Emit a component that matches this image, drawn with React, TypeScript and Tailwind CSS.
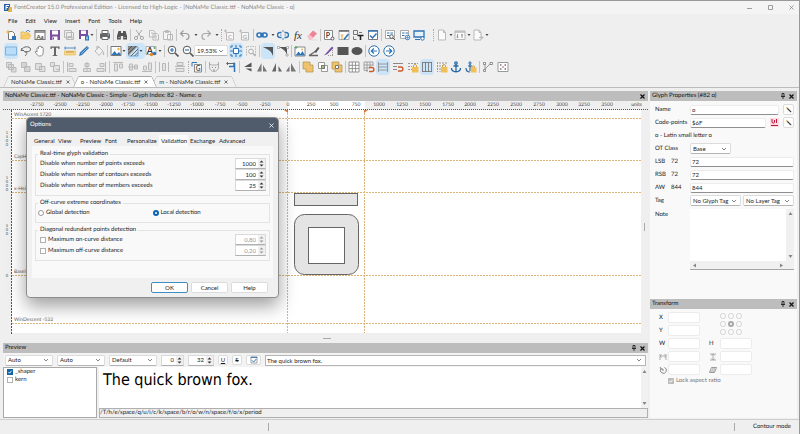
import type { ReactNode } from 'react';

const BLUE = '#2f74b5';
const DARK = '#555555';
const PALE = '#b9b9b9';
const GOLD = '#e9b44c';
const PURPLE = '#7a4fa3';

const icons: Record<string, ReactNode> = {
  newFont: (
    <>
      <path d="M3.5 2.5h4l2 2v6h-6z" fill="#fff" stroke="#777" />
      <path d="M1 3h4M3 1v4" stroke={GOLD} />
      <rect x="7" y="7" width="4" height="4" fill={BLUE} />
    </>
  ),
  open: (
    <>
      <path d="M1 10V3h3l1 1h4v2" fill="#f6d98d" stroke={GOLD} />
      <path d="M1 10l2-4h8l-2 4z" fill="#f7cf6b" stroke={GOLD} strokeWidth=".6" />
      <path d="M6 3c1-2 3-2 4 0" stroke={BLUE} />
    </>
  ),
  installed: (
    <>
      <rect x="1" y="1.5" width="10" height="9" fill="#fff" stroke="#777" />
      <path d="M1 3h10" stroke="#777" strokeWidth="1.5" />
      <text x="6" y="9.5" fontSize="6" fontWeight="700" textAnchor="middle" fill="#444">Aa</text>
    </>
  ),
  save: (
    <>
      <path d="M1 1h10v10H1z" fill={PURPLE} />
      <path d="M3 1.500h6v4H3zM3.500 7.500h5V11h-5z" fill="#fff" />
      <path d="M4.500 8.500v2" stroke={PURPLE} />
    </>
  ),
  saveAll: <path d="M1.500 1.500h7v7h-7zM3.500 3.500h7v7h-7zM5 10V7.500h4V10" fill="#eee" stroke={PALE} />,
  saveAs: (
    <>
      <path d="M1 1h9v9H1z" fill={PURPLE} />
      <path d="M3 1.500h5v3.500H3zM3 7h4v3H3z" fill="#fff" />
      <rect x="7" y="6.500" width="4" height="5" fill={BLUE} />
      <path d="M9 7.500v3" stroke="#fff" />
    </>
  ),
  print: (
    <>
      <path d="M3 1.500h6v3H3z" fill="#fff" stroke="#666" />
      <path d="M1 4.500h10v5H1z" fill="#666" />
      <path d="M3 7.500h6v3H3z" fill="#fff" stroke="#666" />
      <path d="M8.500 6h1.500" stroke="#9cc7ee" />
    </>
  ),
  find: (
    <>
      <path d="M2.500 2h2.500v2h2V2h2.500l1.500 5v3.500H7.200V7H4.800v3.500H1V7z" fill={DARK} />
      <path d="M2 8.500h2M8 8.500h2" stroke="#999" />
    </>
  ),
  cut: (
    <g stroke="#a8a8a8">
      <path d="M3 1l5 7M9 1L4 8" />
      <circle cx="3" cy="9" r="1.600" />
      <circle cx="9" cy="9" r="1.600" />
    </g>
  ),
  copy: <path d="M1.500 1.500h4l1.500 1.500v5H1.500zM5 4.500h4l1.500 1.500v5H5zM3 4h2M6.500 7h2.500M6.500 9h2.500" fill="#f4f4f4" stroke={PALE} />,
  paste: <path d="M1.500 2.500h7v8h-7zM3.500 1.500h3v2h-3zM5.500 5.500h5v5.500h-5z" fill="#f4f4f4" stroke={PALE} />,
  undo: <path d="M4.500 1.500L1.500 4.500l3 3M2 4.500h5c4 0 4 6 0 6" stroke="#9b9b9b" strokeWidth="1.200" />,
  redo: <path d="M7.500 1.500l3 3-3 3M10 4.500H5c-4 0-4 6 0 6" stroke="#a9a9a9" strokeWidth="1.200" />,
  docC: (
    <>
      <path d="M2.500 3.500h7v7.500h-7z" fill="#f6f6f6" stroke={PALE} />
      <path d="M0 2h3M1.500 .5v3" stroke={PALE} />
      <text x="6" y="9.500" fontSize="6" textAnchor="middle" fill="#999">C</text>
    </>
  ),
  docG: (
    <>
      <path d="M2.500 3.500h7v7.500h-7z" fill="#f6f6f6" stroke={PALE} />
      <path d="M0 2h3M1.500 .5v3" stroke={PALE} />
      <text x="6" y="9.500" fontSize="6" textAnchor="middle" fill="#999">G</text>
    </>
  ),
  link: (
    <g stroke={BLUE} strokeWidth="1.600">
      <rect x="1" y="4" width="5" height="4" rx="2" />
      <rect x="6" y="4" width="5" height="4" rx="2" />
      <path d="M4 6h4" />
    </g>
  ),
  unlink: (
    <>
      <path d="M4.500 3.500H3a2.500 2.500 0 000 5h1.500M7.500 3.500H9a2.500 2.500 0 010 5H7.500" stroke={BLUE} strokeWidth="1.400" />
      <path d="M6 1v2M6 9v2M3 6h1.500M7.500 6H9" stroke={BLUE} strokeWidth=".8" />
    </>
  ),
  fx: (
    <text x="6" y="9.500" fontSize="11" fontStyle="italic" fontFamily="Liberation Serif, serif" textAnchor="middle" fill="#333">fx</text>
  ),
  eraser: (
    <>
      <path d="M1.500 7.500l5.500-6 4 3-5.500 6H3.500z" fill="#ef8396" />
      <path d="M1.500 7.500l1.800-2 4 3-1.800 2h-2z" fill="#f9c3cc" />
      <path d="M5 11h6" stroke="#ddd" />
    </>
  ),
  pSettings: (
    <>
      <path d="M1.500 1.500h8v9h-8z" fill="#fff" stroke="#888" />
      <text x="5" y="8.500" fontSize="7" fontWeight="700" textAnchor="middle" fill="#444">P</text>
      <circle cx="9.500" cy="9.500" r="1.500" fill="#fff" stroke="#555" />
    </>
  ),
  tableEdit: (
    <>
      <path d="M1 1.500h10v9H1z" fill="#fff" stroke="#aaa" />
      <path d="M1 2h10" stroke="#666" strokeWidth="1.500" />
      <path d="M2.500 6h3M4 6v4" stroke={GOLD} strokeWidth="1.200" />
      <path d="M6 10.500L10.500 5" stroke={BLUE} strokeWidth="1.600" />
    </>
  ),
  transformTool: (
    <>
      <path d="M1.500 1.500h4v4h-4zM1.500 7.500v3h3M7 3.500h3" stroke="#777" />
      <path d="M5.500 6.500h6M8.500 6.500V11" stroke="#222" strokeWidth="1.600" />
    </>
  ),
  validate: (
    <>
      <path d="M1.500 1.500h9v9h-9z" fill="#fff" stroke="#777" />
      <path d="M1 2h10" stroke={BLUE} strokeWidth="1.500" />
      <path d="M3 6.500L5.500 9l4-4.500" stroke={BLUE} strokeWidth="1.500" />
    </>
  ),
  textFind: (
    <>
      <path d="M1.500 1.500h9v8h-9z" fill="#fff" stroke="#aaa" />
      <path d="M3 4h2.500M6.500 4H9M3 6.500h2.500" stroke={BLUE} />
      <circle cx="7.500" cy="7.500" r="1.800" fill="#fff" stroke="#555" />
      <path d="M9 9l2 2" stroke="#555" />
    </>
  ),
  textWeb: (
    <>
      <path d="M1.500 1.500h8v8h-8z" fill="#fff" stroke="#aaa" />
      <path d="M3 4h2.500M6.500 4H9M3 6.500h2.500" stroke={BLUE} />
      <circle cx="8.500" cy="8.500" r="2.300" fill="#d7e7f7" stroke={BLUE} strokeWidth=".8" />
      <path d="M6.500 8.500h4M8.500 6.500v4" stroke={BLUE} strokeWidth=".5" />
    </>
  ),
  monitor: (
    <>
      <path d="M1 2h10v6H1z" fill="#e4f0fb" stroke={BLUE} strokeWidth="1.300" />
      <path d="M2 10.500h5" stroke={BLUE} />
      <circle cx="9.500" cy="9.500" r="1.700" fill="#fff" stroke={BLUE} />
    </>
  ),
  doc: <path d="M2.500 1h5l2 2.500V11h-7zM7.500 1v2.500h2" fill="#fbfbfb" stroke={PALE} />,
  cards: (
    <>
      <path d="M1 2h10v8.500H1z" fill="#fbfbfb" stroke={PALE} />
      <path d="M1 3h10" stroke={PALE} strokeWidth="1.500" />
      <path d="M3.500 5v4M2.500 8h2M8 5v4M7 6h2" stroke="#999" />
    </>
  ),
  docRun: <path d="M2 1h5l2 2.500V11H2zM7 1v2.500h2M7 8.500h4M9.500 7l1.500 1.500L9.500 10" fill="#fbfbfb" stroke={PALE} />,

  select: <path d="M.5 2h11v8H.5z" fill="#b9ddf8" stroke="#7fb2dc" />,
  lasso: (
    <>
      <path d="M2 4.500C3 1 10 1 10.500 4S6 7 4 6.500M2 3l-1 2.500 3 0" stroke="#666" />
      <path d="M5 7c3 0 2 2 0 4" stroke="#666" />
    </>
  ),
  pan: <path d="M3 6V3.500c0-1 1.500-1 1.500 0V2c0-1 1.500-1 1.500 0 0-1 1.500-1 1.500 0v1c0-1 1.700-1 1.700 0V7c0 3-1 4-3.500 4-2 0-2.500-1-4.500-4 0-1 1-1 2 0z" fill="#fff" stroke="#777" strokeWidth=".8" />,
  text: <path d="M1.500 4V1.500h9V4h-1l-.5-1.200H7V10l1.500.5v.5h-5v-.5L5 10V2.800H3L2.500 4z" fill="#666" />,
  measure: (
    <>
      <path d="M1 1.500v3M11 1.500v3M1 3h10" stroke={BLUE} strokeWidth=".8" />
      <path d="M.5 6h11v4H.5z" fill="#f8d789" stroke={GOLD} strokeWidth=".6" />
      <path d="M3 6v2M5 6v2M7 6v2M9 6v2" stroke="#997428" strokeWidth=".6" />
    </>
  ),
  pencil: (
    <>
      <path d="M1 11l1-3.500L9 1l2 2-7 7z" fill={BLUE} />
      <path d="M3 9l6.500-6.500" stroke="#a7cdf0" strokeWidth=".8" />
    </>
  ),
  bucket: (
    <>
      <path d="M2 6l4-4 4 4-4 4.500z" fill="#f2f2f2" stroke={PALE} />
      <path d="M4 4.500V1.500h2M10.500 7v3" stroke={PALE} strokeWidth="1.200" />
    </>
  ),
  image: (
    <>
      <path d="M1 1.500h10v9H1z" fill="#fff" stroke="#777" />
      <path d="M1.500 10l3-4 2.500 3 2-2 2 3z" fill={BLUE} />
      <circle cx="8.500" cy="4" r="1.200" fill={GOLD} />
    </>
  ),
  hatch: (
    <>
      <path d="M1 1h10L1 11z" fill="#888" />
      <path d="M4 11L11 4M7.500 11L11 7.500M1 5l4-4M1 9l8-8" stroke="#555" strokeWidth=".9" />
      <path d="M2 11h9V2" stroke={BLUE} strokeWidth=".6" />
    </>
  ),
  colorA: (
    <>
      <path d="M1 1.500h10v8H1z" fill="#fff" stroke="#aaa" />
      <text x="5" y="9" fontSize="9" fontWeight="700" textAnchor="middle" fill="#333">A</text>
      <circle cx="6.500" cy="9.500" r="1.800" fill="#e58a2b" />
      <circle cx="9.500" cy="8.500" r="1.700" fill={BLUE} />
      <circle cx="9.500" cy="3" r="1" fill="#59a869" />
    </>
  ),
  zoomIn: (
    <>
      <circle cx="5" cy="5" r="3.800" fill="#fff" stroke="#555" />
      <path d="M8 8l3.500 3.500" stroke="#555" strokeWidth="1.600" />
      <path d="M3 5h4M5 3v4" stroke={BLUE} strokeWidth="1.200" />
    </>
  ),
  zoomOut: (
    <>
      <circle cx="5" cy="5" r="3.800" fill="#fff" stroke="#555" />
      <path d="M8 8l3.500 3.500" stroke="#555" strokeWidth="1.600" />
      <path d="M3 5h4" stroke={BLUE} strokeWidth="1.200" />
    </>
  ),
  fit: (
    <>
      <path d="M3.500 3.500h5v5h-5z" fill="#fff" stroke={BLUE} />
      <path d="M1 3V1h2M9 1h2v2M11 9v2H9M3 11H1V9M6 0v3M6 9v3M0 6h3M9 6h3" stroke={BLUE} />
    </>
  ),
  zoomPage: (
    <>
      <path d="M1.500 10.500v-9h9v9" stroke={PALE} strokeDasharray="1.500 1" />
      <circle cx="6" cy="6.500" r="2.300" fill="#f6f6f6" stroke="#aaa" />
      <path d="M8 8.500l2.500 2.500" stroke="#aaa" strokeWidth="1.300" />
    </>
  ),
  fillShape: <path d="M1 2h10v9C9 5 5 4 1 2z" fill={DARK} />,
  nodeShape: (
    <>
      <path d="M2 2h8v8C9 6 6 4 2 2z" fill={DARK} />
      <path d="M.5 1.500h2v2h-2zM9.500 1.500h2v2h-2zM9 9h2v2H9z" fill="#fff" stroke="#888" strokeWidth=".6" />
    </>
  ),
  picture: (
    <>
      <path d="M1 2h10v9H1z" fill="#fff" stroke="#888" />
      <path d="M1.500 10.500l3-4 2 2.500 2-3 2.500 4.500z" fill={BLUE} />
      <path d="M.5 2.500h3M2 1v3" stroke="#59a869" />
      <circle cx="8" cy="4.500" r="1" fill={GOLD} />
    </>
  ),
  bend: (
    <>
      <path d="M1 10.500h9M1 10.500L8 6" stroke="#666" strokeWidth="1.300" />
      <path d="M6.500 6.500L10 2l1.500 1-3.500 5z" fill={DARK} />
    </>
  ),
  knife: (
    <>
      <path d="M1 10.500L9 1.500l1.500 1.500-6 6z" fill={PURPLE} />
      <path d="M5 10.500h6M9.500 5v5" stroke="#999" strokeDasharray="1 1" />
    </>
  ),
  rectShape: <path d="M.5 2h11v8H.5z" fill={DARK} />,
  ellipse: <ellipse cx="6" cy="6" rx="5.500" ry="4" fill={DARK} />,
  prev: (
    <>
      <circle cx="6" cy="6" r="5.200" fill="#fff" stroke={BLUE} />
      <path d="M9 6H3.500M5.800 3.500L3.300 6l2.500 2.500" stroke={BLUE} strokeWidth="1.200" />
    </>
  ),
  next: (
    <>
      <circle cx="6" cy="6" r="5.200" fill="#fff" stroke={BLUE} />
      <path d="M3 6h5.500M6.200 3.500L8.700 6 6.200 8.500" stroke={BLUE} strokeWidth="1.200" />
    </>
  ),

  toFront: <path d="M1.500 1.500h5v5h-5zM6.500 6.500h4.500V11H6.500zM3.500 3.500h5v5h-5z" fill="#dcdcdc" stroke={PALE} />,
  forward: <path d="M1.500 1.500h5v5h-5zM4.500 5.500h5.500v5H4.500z" fill="#d5d5d5" stroke={PALE} />,
  backward: <path d="M5.500 5.500h5.500v5H5.500zM1.500 2.500h6v6h-6z" fill="#dedede" stroke={PALE} />,
  toBack: <path d="M4.500 4.500h6v6h-6zM1.500 1.500h4v4h-4zM7.500 8.500h3" fill="#e2e2e2" stroke={PALE} />,
  alignL: <path d="M1.500 1v10M3 2.500h4v3H3zM3 7.500h7v3H3z" fill="#e2e2e2" stroke={PALE} />,
  alignC: <path d="M6 1v10M4 2.500h4v3H4zM2.500 7.500h7v3h-7z" fill="#e2e2e2" stroke={PALE} />,
  alignR: <path d="M10.500 1v10M5 2.500h4v3H5zM2 7.500h7v3H2z" fill="#e2e2e2" stroke={PALE} />,
  alignT: <path d="M1 1.500h10M2.500 3h3v7h-3zM7.500 3h3v4h-3z" fill="#e2e2e2" stroke={PALE} />,
  alignM: <path d="M1 6h10M2.500 3h3v6h-3zM7.500 4h3v4h-3z" fill="#e2e2e2" stroke={PALE} />,
  alignB: <path d="M1 10.500h10M2.500 5h3v4h-3zM7.500 2h3v7h-3z" fill="#e2e2e2" stroke={PALE} />,
  spreadH: <path d="M1.500 1v10M10.500 1v10M4.500 2.500h3v7h-3z" fill="#e2e2e2" stroke={PALE} />,
  spreadV: <path d="M1 5.500h10M3 1.500h6v3H3zM2 7.500h8v3H2z" fill="#e2e2e2" stroke={PALE} />,
  boxG: (
    <>
      <path d="M3.500 3.500h7v7.500h-7z" fill="#fff" stroke="#888" />
      <path d="M1 1.500h5M1 1.500v4" stroke={BLUE} />
      <text x="7" y="9.800" fontSize="6.500" fontWeight="700" textAnchor="middle" fill="#555">G</text>
    </>
  ),
  mask: (
    <>
      <path d="M1.500 3L3.500 4h5l2-1v3c0 6-9 6-9 0zM1.500 3V1M10.500 3V1" fill="#eee" stroke="#aaa" />
      <path d="M4 6.500h1M7 6.500h1M5 9h2" stroke="#888" />
    </>
  ),
  metrics: (
    <>
      <path d="M2 2.500h8M3 1L1.500 2.500 3 4" stroke="#666" />
      <path d="M4 5.500h5V1.500M9.500 2v9" stroke={BLUE} strokeWidth="1.500" />
    </>
  ),
  rotL: <path d="M9.500 1.500v4.500H2zM3.500 7.500h6v3z" fill={DARK} />,
  rotR: <path d="M5.500 2v8.500H1zM7 4l4 6.500H7z" fill="#777" />,
  flipH: <path d="M5 2v8.500H1zM7.500 5v5.500H11zM7 3h2" fill="#666" />,
  flipV: <path d="M4.500 5v5.500H1zM6 2l5 8.500H6z" fill="#777" />,
  union: <path d="M1 1h7v3h3v7H4V8H1z" fill="#efc36d" stroke="#b08d49" strokeWidth=".7" />,
  intersect: (
    <>
      <path d="M1.500 1.500h6v6h-6zM4.500 4.500h6v6h-6z" fill="#fff" stroke="#999" />
      <path d="M4.500 4.500h3v3h-3z" fill="#9cc37a" stroke="#777" />
    </>
  ),
  exclude: (
    <>
      <path d="M1 1h7v3h3v7H4V8H1z" fill="#efc36d" stroke="#b08d49" strokeWidth=".7" />
      <path d="M4.500 4.500h3v3h-3z" fill="#fff" stroke="#777" />
    </>
  ),
  grid: <path d="M1 1h10v10H1zM4.300 1v10M7.600 1v10M1 4.300h10M1 7.600h10" fill="#fff" stroke="#8a8a8a" strokeWidth=".9" />,
  gridSnap: (
    <>
      <path d="M1 9V1h9v4M4 1v10M7 1v5M1 4h9M1 7h6M1 9.500h4" stroke="#999" strokeWidth=".9" />
      <path d="M6 6.500h3c2.500 0 2.500 4 0 4H6" stroke="#cc5b2a" strokeWidth="1.400" />
    </>
  ),
  guides: <path d="M1 3h10M1 6h10M1 9h10M1.500 1v10M10.500 1v10" stroke="#888" strokeWidth=".8" />,
  guideSnap: (
    <>
      <path d="M1 2.500h10M1 5.500h4M1 8.500h4" stroke="#888" />
      <path d="M6 6h3c2.500 0 2.500 4 0 4H6" stroke="#cc5b2a" strokeWidth="1.400" />
    </>
  ),
  guideLock: (
    <>
      <path d="M1 2.500h10M1 5.500h4M1 8.500h4" stroke="#999" strokeDasharray="2 1" />
      <path d="M6.500 6V5c0-2 3-2 3 0v1" stroke="#c79a3a" />
      <path d="M5 6h6.500v5.500H5z" fill="#f0bf57" />
    </>
  ),
  columns: <path d="M1 1.500h10M1 10.500h10M1.500 1v10M4.500 1v10M7.500 1v10M10.500 1v10" stroke="#777" strokeWidth=".9" />,
  columnLock: (
    <>
      <path d="M1.500 1v10M4 1v10M7 1v4M10 1v3" stroke="#999" strokeDasharray="2 1" />
      <path d="M6.500 6V5c0-2 3-2 3 0v1" stroke="#c79a3a" />
      <path d="M5 6h6.500v5.500H5z" fill="#f0bf57" />
    </>
  ),
  anchor: (
    <g stroke="#2467a8" strokeWidth="1.300">
      <circle cx="6" cy="2" r="1.200" />
      <path d="M6 3v8M3.500 5h5M1.500 7c0 5 9 5 9 0" />
    </g>
  ),
  anchorLock: (
    <>
      <path d="M5 3v7M3 5h4M1 7c0 3 2 4 4 4" stroke="#2467a8" strokeWidth="1.200" />
      <circle cx="5" cy="2" r="1.100" stroke="#2467a8" />
      <path d="M7 7V6c0-1.500 2.500-1.500 2.500 0v1" stroke="#c79a3a" />
      <path d="M5.800 6.500h5.700v5H5.800z" fill="#f0bf57" />
    </>
  ),
  nodes: (
    <>
      <path d="M3 3v6M3 8l5-5" stroke="#999" />
      <path d="M1.500 1.500h2v2h-2zM8 1.500h2.500v2H8zM1.500 8.500h2v2h-2z" fill="#fff" stroke="#777" strokeWidth=".8" />
    </>
  ),
  dice: (
    <>
      <path d="M1 1.500h10v9H1z" fill="#fff" stroke="#999" />
      <path d="M3 4h1.500M7.500 4H9M3 8h1.500M7.500 8H9" stroke="#777" strokeWidth="1.500" />
      <path d="M5 6h2" stroke="#cc5b5b" />
    </>
  ),
};

function Icon({ name }: { name: string }) {
  return (
    <svg viewBox="0 0 12 12" className="size-3 shrink-0" fill="none" aria-hidden="true">
      {icons[name]}
    </svg>
  );
}

function Tool({ name, active }: { name: string; active?: boolean }) {
  return (
    <button
      type="button"
      aria-label={name}
      className={active ? 'rounded-xs bg-[#cbe4f8] py-px outline outline-[#cbe4f8]' : 'py-px'}
    >
      <Icon name={name} />
    </button>
  );
}

function Caret() {
  return (
    <svg viewBox="0 0 4 4" className="size-1 shrink-0" aria-hidden="true">
      <path d="M.5 1h3L2 3z" fill="#444" />
    </svg>
  );
}

function Sep({ dotted }: { dotted?: boolean }) {
  return (
    <span className="flex w-[5px] shrink-0 justify-center">
      <span className={dotted ? 'h-3 border-l border-dotted border-[#aaa]' : 'h-3 border-l border-[#c4c4c4]'} />
    </span>
  );
}

// A name starting with "*" is switched on, "v" is a drop-down caret.
function Group({ width, items }: { width: string; items: string }) {
  return (
    <div className={`flex shrink-0 items-center justify-between ${width}`}>
      {items.split(' ').map((item, i) =>
        item === 'v' ? (
          <Caret key={i} />
        ) : (
          <Tool key={i} name={item.replace('*', '')} active={item.startsWith('*')} />
        ),
      )}
    </div>
  );
}

function Chevron() {
  return (
    <svg viewBox="0 0 6 6" className="pointer-events-none absolute top-1/2 right-1 size-1.5 -translate-y-1/2" fill="none">
      <path d="M1 2l2 2 2-2" stroke="#666" strokeWidth=".8" />
    </svg>
  );
}

function Combo({ label, value, className }: { label: string; value: string; className: string }) {
  return (
    <div className={`relative ${className}`}>
      <select
        aria-label={label}
        className="block h-[11px] w-full appearance-none rounded-xs border border-[#dcdcdc] border-b-[#b5b5b5] bg-white pl-0.5 leading-[8px]"
      >
        <option>{value}</option>
      </select>
      <Chevron />
    </div>
  );
}

function Spin({ id, label, value, className, disabled }: { id?: string; label?: string; value: string; className: string; disabled?: boolean }) {
  return (
    <div className={`flex h-[11px] items-center border border-[#dadada] border-b-[#b0b0b0] bg-white ${className}`}>
      <input
        id={id}
        aria-label={label}
        defaultValue={value}
        disabled={disabled}
        className="w-0 min-w-0 flex-1 pr-0.5 text-right disabled:text-[#999]"
      />
      <svg viewBox="0 0 7 9" className="h-[9px] w-[7px] bg-[#f0f0f0]" aria-hidden="true">
        <path d="M1.500 3.500l2-2 2 2zM1.500 5.500l2 2 2-2z" fill={disabled ? '#999' : '#333'} />
      </svg>
    </div>
  );
}

function Check({ label, checked, disabled }: { label: string; checked?: boolean; disabled?: boolean }) {
  return (
    <label className={disabled ? 'flex items-center gap-0.5 text-[#777]' : 'flex items-center gap-0.5'}>
      <span className="relative flex">
        <input
          type="checkbox"
          defaultChecked={checked}
          disabled={disabled}
          className="peer size-[6px] appearance-none border border-[#b0b0b0] bg-white checked:border-[#1464a5] checked:bg-[#1464a5] checked:disabled:border-[#bdbdbd] checked:disabled:bg-[#bdbdbd]"
        />
        <svg viewBox="0 0 6 6" className="pointer-events-none absolute inset-0 hidden size-[6px] peer-checked:block" fill="none">
          <path d="M1.500 3l1 1.200 2-2.400" stroke="#fff" strokeWidth=".9" />
        </svg>
      </span>
      {label}
    </label>
  );
}

function PanelHeader({ title, pin }: { title: string; pin?: boolean }) {
  return (
    <div className="flex h-[10px] items-center gap-1 bg-[#bdbdbd] pr-[3px] pl-0.5">
      <h2 className="flex-1 truncate text-[#111]">{title}</h2>
      {pin && (
        <button type="button" aria-label="Pin">
          <svg viewBox="0 0 4 6" className="h-1.5 w-1" fill="none">
            <path d="M1 .5h2v3H1zM0 3.500h4M2 3.500V6" stroke="#222" strokeWidth=".9" />
          </svg>
        </button>
      )}
      <button type="button" aria-label="Close panel">
        <svg viewBox="0 0 5 5" className="size-[5px]" fill="none">
          <path d="M.5.5l4 4M4.500.5l-4 4" stroke="#111" strokeWidth="1.200" />
        </svg>
      </button>
    </div>
  );
}

function DocTab({ title, active }: { title: string; active?: boolean }) {
  const face = active
    ? 'before:bg-white after:bg-white before:border-[#a5a5a5] after:border-[#a5a5a5] z-10'
    : 'before:bg-[#f1f1f1] after:bg-[#f1f1f1] before:border-[#c6c6c6] after:border-[#c6c6c6]';
  return (
    <div
      className={`relative -mr-[5px] flex h-[11px] items-center gap-1 px-2 before:absolute before:inset-y-0 before:right-1/2 before:left-0 before:origin-bottom before:-skew-x-[24deg] before:rounded-tl-xs before:border-t before:border-l after:absolute after:inset-y-0 after:right-0 after:left-1/2 after:origin-bottom after:skew-x-[24deg] after:rounded-tr-xs after:border-t after:border-r ${face}`}
    >
      <button type="button" className="relative z-10 whitespace-nowrap">{title}</button>
      <button type="button" aria-label={`Close ${title}`} className="relative z-10">
        <svg viewBox="0 0 4 4" className="size-1" fill="none">
          <path d="M.5.5l3 3M3.500.5l-3 3" stroke="#555" strokeWidth=".8" />
        </svg>
      </button>
    </div>
  );
}

function Toolbars() {
  return (
    <div className="flex flex-col gap-px pb-0.5 pl-[5px]">
      <div className="flex h-[15px] items-center">
        <Group width="w-[85px]" items="newFont open installed save saveAll saveAs" />
        <Caret />
        <Sep />
        <Group width="w-3" items="print" />
        <Sep />
        <Group width="w-3" items="find" />
        <Sep />
        <Group width="w-[41px]" items="cut copy paste" />
        <Sep />
        <Group width="w-[40px]" items="undo v redo v" />
        <Sep dotted />
        <Group width="w-[27px]" items="docC docG" />
        <Sep />
        <Group width="w-[62px]" items="link v unlink fx eraser" />
        <Sep />
        <Group width="w-[56px]" items="pSettings tableEdit transformTool validate" />
        <Sep />
        <Group width="w-[41px] mr-1.5" items="textFind textWeb monitor" />
        <Sep dotted />
        <Group width="w-[53px]" items="doc v cards v docRun v" />
      </div>
      <div className="flex h-[15px] items-center">
        <Group width="w-[100px]" items="*select lasso pan text measure pencil bucket" />
        <Sep />
        <Group width="w-4" items="image v" />
        <div className="mx-px flex w-[17px] items-center rounded-xs bg-[#cbe4f8] outline outline-[#cbe4f8]">
          <Tool name="hatch" />
          <Caret />
        </div>
        <Group width="w-[17px]" items="colorA v" />
        <Sep />
        <Group width="w-[27px]" items="zoomIn zoomOut" />
        <Combo label="Zoom" value="19,53%" className="mr-0.5 w-[34px]" />
        <Group width="w-[27px]" items="*fit zoomPage" />
        <Sep />
        <Group width="w-[27px]" items="*fillShape nodeShape" />
        <Sep />
        <Group width="w-[69px]" items="picture bend knife rectShape ellipse" />
        <Sep />
        <Group width="w-[27px]" items="prev next" />
      </div>
      <div className="flex h-[15px] items-center">
        <Group width="w-[56px]" items="toFront forward backward toBack" />
        <Sep />
        <Group width="w-[41px]" items="alignL alignC alignR" />
        <Sep />
        <Group width="w-[41px]" items="alignT alignM alignB" />
        <Sep />
        <Group width="w-[28px]" items="spreadH spreadV" />
        <Sep dotted />
        <Group width="w-3" items="boxG" />
        <Sep />
        <Group width="w-[29px]" items="mask metrics" />
        <Sep />
        <Group width="w-[55px]" items="rotL rotR flipH flipV" />
        <Sep />
        <Group width="w-[41px]" items="union intersect exclude" />
        <Sep />
        <Group
          width="w-[129px]"
          items="grid gridSnap *guides guideSnap guideLock *columns columnLock anchor anchorLock"
        />
        <Sep />
        <Group width="w-[27px]" items="nodes dice" />
      </div>
    </div>
  );
}

const rulerLabels = Array.from({ length: 26 }, (_, i) => (i - 11) * 250);
const rulerX = (units: number) => 285 + Math.round(units * 0.0912);
const rowLabels = [1500, 1000, 500, 0];
const guides = [
  { y: 8, name: 'WinAscent 1720' },
  { y: 50, name: 'CapHeight' },
  { y: 82, name: 'x-Height' },
  { y: 165, name: 'Baseline' },
  { y: 213, name: 'WinDescent -532' },
];

function GlyphEditor() {
  return (
    <section className="flex flex-1 flex-col">
      <PanelHeader title="NoNaMe Classic.ttf - NoNaMe Classic - Simple - Glyph Index: 82 - Name: o" />
      <svg className="h-[9px] w-full shrink-0 bg-[#efefef]" fontSize="5" fill="#444">
        <rect x="285" width="77" height="9" fill="#fff" />
        {rulerLabels.map((n) => (
          <text key={n} x={rulerX(n)} y="5" textAnchor="middle">
            {n}
          </text>
        ))}
        <text x="639" y="5" textAnchor="end">units</text>
        <path d="M0 8.500h646" stroke="#555" strokeDasharray="1 1" />
      </svg>
      <div className="flex flex-1 bg-[#efefef]">
        <svg className="w-[9px] shrink-0" fontSize="4" fill="#444">
          {rowLabels.map((n) => (
            <text key={n} textAnchor="middle">
              {String(n).split('').map((digit, i, all) => (
                <tspan key={i} x="4" y={167 - n * 0.0916 + (i - (all.length - 1) / 2) * 4}>
                  {digit}
                </tspan>
              ))}
            </text>
          ))}
          <path d="M8.500 0v224" stroke="#555" strokeDasharray="2 1" />
        </svg>
        <div className="flex min-w-0 flex-1 flex-col">
          <svg className="h-[223px] w-full bg-white" fontSize="5" fill="none">
            {guides.map((g) => (
              <g key={g.name}>
                <text x="2" y={g.y - 2} fill="#666">{g.name}</text>
                <path d={`M0 ${g.y}.5h1600`} stroke="#dbb57a" strokeDasharray="2 1" />
              </g>
            ))}
            <path d="M275.500 0v223M352.500 0v223" stroke="#dbb57a" strokeDasharray="2 1" />
            <path d="M272 0h4v3zM352 3V0h4z" fill="#d9762e" />
            <rect x="282.500" y="83.500" width="63" height="12" fill="#e4e4e4" stroke="#666" />
            <rect x="282.500" y="104.500" width="64" height="60" rx="10" fill="#e4e4e4" stroke="#666" />
            <rect x="296.500" y="117.500" width="36" height="36" fill="#fff" stroke="#666" />
          </svg>
          <div className="flex h-[10px] items-center justify-center">
            <span className="h-px w-2 bg-[#aaa]" />
          </div>
        </div>
        <div className="flex w-[7px] items-center justify-center">
          <span className="h-2 w-px bg-[#aaa]" />
        </div>
      </div>
    </section>
  );
}

function ScrollArrow({ d }: { d: string }) {
  return (
    <svg viewBox="0 0 5 5" className="size-[5px]" aria-hidden="true">
      <path d={d} fill="#888" />
    </svg>
  );
}

const UP = 'M.5 4h4l-2-3z';
const DOWN = 'M.5 1h4l-2 3z';

function PreviewPanel() {
  return (
    <section>
      <PanelHeader title="Preview" pin />
      <div className="flex h-[14px] items-center gap-1 bg-[#f3f3f3] px-0.5">
        <Combo label="Script" value="Auto" className="w-[48px]" />
        <Combo label="Language" value="Auto" className="w-[48px]" />
        <Combo label="Direction" value="Default" className="w-[48px]" />
        <Spin label="Spacing" value="0" className="w-[23px]" />
        <Spin label="Size" value="32" className="w-[26px]" />
        <button type="button" className="w-[10px] rounded-xs border border-[#dcdcdc] bg-white underline">U</button>
        <button type="button" className="w-[10px] rounded-xs border border-[#dcdcdc] bg-white line-through">S</button>
        <button type="button" aria-label="Layout features" className="flex w-[15px] justify-center rounded-xs border border-[#dcdcdc] bg-white">
          <svg viewBox="0 0 12 12" className="size-2" fill="none">{icons.validate}</svg>
        </button>
        <div className="relative flex-1">
          <input
            aria-label="Preview text"
            defaultValue="The quick brown fox."
            className="block h-[11px] w-full border border-[#b5b5b5] bg-white px-px"
          />
          <Chevron />
        </div>
      </div>
      <div className="flex h-[51px] gap-0.5 bg-[#efefef]">
        <div className="flex w-[94px] flex-col border border-[#a9a9a9] bg-white px-[3px]">
          <Check label="_shaper" checked />
          <Check label="kern" />
        </div>
        <div className="flex flex-1 flex-col">
          <div className="flex flex-1 bg-white">
            <p className="flex-1 pt-[3px] pl-1 font-['DejaVu_Sans_Condensed','DejaVu_Sans',sans-serif] text-[16px] leading-[20px] text-black">
              The quick brown fox.
            </p>
            <div className="flex w-[7px] flex-col items-center justify-between bg-[#f1f1f1] py-0.5">
              <ScrollArrow d={UP} />
              <ScrollArrow d={DOWN} />
            </div>
          </div>
          <div className="h-[10px] border border-[#b0b0b0] bg-[#efefef]">
            /T/h/e/space/q/u/i/c/k/space/b/r/o/w/n/space/f/o/x/period
          </div>
        </div>
      </div>
    </section>
  );
}

function Field({ id, label, side, children }: { id?: string; label: string; side?: string; children: ReactNode }) {
  return (
    <div className="flex h-[13px] items-center gap-0.5">
      <label htmlFor={id} className={side ? 'w-[14px]' : 'w-[33px] whitespace-nowrap'}>{label}</label>
      {side && <span className="w-[17px]">{side}</span>}
      {children}
    </div>
  );
}

const fieldClass = 'h-[10px] w-0 min-w-0 flex-1 rounded-xs border border-[#ececec] border-b-[#8f8f8f] bg-white px-px';

function WandButton() {
  return (
    <button type="button" aria-label="Generate" className="ml-0.5 rounded-xs border border-[#dcdcdc] bg-white p-px">
      <svg viewBox="0 0 8 8" className="size-[7px]" fill="none">
        <path d="M2.500 2.500L7 7" stroke="#444" strokeWidth="1.500" />
        <path d="M1 2h2M2 1v2" stroke={GOLD} strokeWidth=".8" />
      </svg>
    </button>
  );
}

function GlyphProperties() {
  return (
    <section className="bg-[#f9f9f9]">
      <PanelHeader title="Glyph Properties (#82 o)" pin />
      <div className="pt-0.5 pr-[3px] pb-[29px] pl-[5px]">
        <Field id="name" label="Name">
          <input id="name" defaultValue="o" className={fieldClass} />
          <WandButton />
        </Field>
        <Field id="code" label="Code-points">
          <input id="code" defaultValue="$6F" className={fieldClass} />
          <button type="button" aria-label="Character map" className="ml-0.5">
            <svg viewBox="0 0 9 9" className="size-[9px]" fill="none">
              <path d="M0 0h9v9H0z" fill="#f9dbe1" />
              <path d="M2 1v3c0 1.500 2.500 1.500 2.500 0V2M6.500 1v4M1 7.500h7" stroke="#c2183b" />
            </svg>
          </button>
          <WandButton />
        </Field>
        <p className="flex h-[13px] items-center">o - Latin small letter o</p>
        <Field label="OT Class">
          <Combo label="OT Class" value="Base" className="w-[41px]" />
        </Field>
        <Field id="lsb" label="LSB" side="72">
          <input id="lsb" defaultValue="72" className={fieldClass} />
        </Field>
        <Field id="rsb" label="RSB" side="72">
          <input id="rsb" defaultValue="72" className={fieldClass} />
        </Field>
        <Field id="aw" label="AW" side="844">
          <input id="aw" defaultValue="844" className={fieldClass} />
        </Field>
        <Field label="Tag">
          <Combo label="Glyph tag" value="No Glyph Tag" className="flex-1" />
          <Combo label="Layer tag" value="No Layer Tag" className="flex-1" />
        </Field>
        <div className="flex gap-0.5 pt-0.5">
          <label htmlFor="note" className="w-[33px] pt-0.5">Note</label>
          <div className="grid flex-1 grid-cols-[1fr_8px] border-b border-[#a5a5a5] bg-[#f0f0f0]">
            <textarea id="note" className="block h-[52px] w-full resize-none bg-white" />
            <div className="flex flex-col items-center justify-between py-0.5">
              <ScrollArrow d={UP} />
              <ScrollArrow d={DOWN} />
            </div>
            <div className="flex h-2 items-center justify-between px-0.5">
              <ScrollArrow d="M4 .5v4l-3-2z" />
              <ScrollArrow d="M1 .5v4l3-2z" />
            </div>
          </div>
        </div>
      </div>
    </section>
  );
}

const smallField = 'h-[11px] w-[32px] rounded-xs border border-[#ececec] bg-white';

function TransformPanel() {
  return (
    <section className="flex-1 bg-[#f9f9f9]">
      <PanelHeader title="Transform" pin />
      <div className="flex gap-[9px] pt-[3px] pl-[9px]">
        <div className="flex flex-col gap-0.5">
          {['X', 'Y', 'W', 'Scale', 'Rotate'].map((name) => (
            <label key={name} className="flex items-center">
              <span className="w-[9px]">
                {name === 'Scale' ? (
                  <svg viewBox="0 0 8 8" className="size-2" fill="none" aria-label={name}>
                    <path d="M1 1v6M7 1v6M1 3h6M2.500 1.500L1 3l1.500 1.500M5.500 1.500L7 3 5.500 4.500" stroke="#aaa" />
                  </svg>
                ) : name === 'Rotate' ? (
                  <svg viewBox="0 0 8 8" className="size-2" fill="none" aria-label={name}>
                    <path d="M5.500 1.500a3 3 0 11-3.500 1M1 1l1 2h2M4 3v2" stroke="#888" />
                  </svg>
                ) : (
                  name
                )}
              </span>
              <input className={smallField} />
            </label>
          ))}
        </div>
        <div className="flex flex-col gap-0.5">
          <div className="grid h-6 w-6 grid-cols-3 place-items-center self-center" role="radiogroup" aria-label="Origin">
            {Array.from({ length: 9 }, (_, i) => (
              <input
                key={i}
                type="radio"
                name="origin"
                aria-label={`Origin ${i + 1}`}
                defaultChecked={i === 4}
                className="size-[6px] appearance-none rounded-full border border-[#d0d0d0] bg-white checked:border-2 checked:border-[#a8a8a8]"
              />
            ))}
          </div>
          {['H', 'Scale height', 'Skew'].map((name) => (
            <label key={name} className="flex items-center">
              <span className="w-[11px]">
                {name === 'Scale height' ? (
                  <svg viewBox="0 0 8 8" className="size-2" fill="none" aria-label={name}>
                    <path d="M1 1h6M1 7h6M4 1v6M2.500 2.500L4 1l1.500 1.500M2.500 5.500L4 7l1.500-1.500" stroke="#aaa" />
                  </svg>
                ) : name === 'Skew' ? (
                  <svg viewBox="0 0 8 8" className="size-2" fill="none" aria-label={name}>
                    <path d="M2.500 1.500h5l-2 5h-5zM3 3h3M1.500 5h4" stroke="#999" />
                  </svg>
                ) : (
                  name
                )}
              </span>
              <input className={smallField} />
            </label>
          ))}
        </div>
      </div>
      <div className="pt-0.5 pl-[18px]">
        <Check label="Lock aspect ratio" checked disabled />
      </div>
    </section>
  );
}

function Fieldset({ legend, children }: { legend: string; children: ReactNode }) {
  return (
    <fieldset className="border border-[#e3e3e3] px-0.5 pb-1">
      <legend className="px-0.5">{legend}</legend>
      {children}
    </fieldset>
  );
}

const optionTabs = [
  ['General', 'w-[24px]'],
  ['View', 'w-[22px]'],
  ['Preview', 'w-[25px]'],
  ['Font', 'w-[22px]'],
  ['Personalize', 'w-[34px]'],
  ['Validation', 'w-[29px]'],
  ['Exchange', 'w-[29px]'],
  ['Advanced', 'w-[29px]'],
];

const limits = [
  ['Disable when number of points exceeds', '1000'],
  ['Disable when number of contours exceeds', '100'],
  ['Disable when number of members exceeds', '25'],
];

const distances = [
  ['Maximum on-curve distance', '0,80'],
  ['Maximum off-curve distance', '0,20'],
];

const radioClass = 'size-[6px] appearance-none rounded-full border border-[#999] bg-white checked:border-2 checked:border-[#0a63b5]';
const dialogButton = 'h-[11px] w-[37px] rounded-xs border bg-white';

function OptionsDialog() {
  return (
    <div
      role="dialog"
      aria-label="Options"
      className="absolute top-[116px] left-[26px] z-20 w-[253px] overflow-hidden rounded-sm border border-[#8d8d8d] bg-[#f0f0f0] shadow-[0_8px_18px_rgba(0,0,0,0.38)]"
    >
      <div className="flex h-[14px] items-center justify-between bg-[#505b6b] px-[3px] text-white">
        <h1>Options</h1>
        <button type="button" aria-label="Close">
          <svg viewBox="0 0 5 5" className="mr-px size-[5px]" fill="none">
            <path d="M.5.5l4 4M4.500.5l-4 4" stroke="#fff" strokeWidth=".8" />
          </svg>
        </button>
      </div>
      <div className="px-[5px] pt-[3px] pb-1">
        <div className="flex h-[11px]" role="tablist">
          {optionTabs.map(([name, width]) => (
            <button
              key={name}
              type="button"
              role="tab"
              aria-selected={name === 'Validation'}
              className={`shrink-0 pl-0.5 text-left aria-selected:bg-[#fbfbfb] ${width}`}
            >
              {name}
            </button>
          ))}
        </div>
        <div className="flex flex-col gap-[3px] bg-[#f9f9f9] px-[3px] pt-1 pb-[17px]">
          <Fieldset legend="Real-time glyph validation">
            {limits.map(([label, value], i) => (
              <div key={label} className="flex h-[11px] items-center justify-between pr-px pl-0.5">
                <label htmlFor={`limit${i}`}>{label}</label>
                <Spin id={`limit${i}`} value={value} className="w-[31px]" />
              </div>
            ))}
          </Fieldset>
          <Fieldset legend="Off-curve extreme coordinates">
            <div className="grid h-[11px] grid-cols-2 items-center">
              <label className="flex items-center gap-0.5">
                <input type="radio" name="extreme" className={radioClass} />
                Global detection
              </label>
              <label className="flex items-center gap-0.5">
                <input type="radio" name="extreme" defaultChecked className={radioClass} />
                Local detection
              </label>
            </div>
          </Fieldset>
          <Fieldset legend="Diagonal redundant points detection">
            {distances.map(([label, value]) => (
              <div key={label} className="flex h-[11px] items-center justify-between pr-px pl-0.5">
                <Check label={label} />
                <Spin label={`${label} value`} value={value} className="w-[31px]" disabled />
              </div>
            ))}
          </Fieldset>
        </div>
        <div className="flex justify-end gap-[3px] pt-1 pr-[5px]">
          <button type="button" className={`${dialogButton} border-[#3c8fc0]`}>OK</button>
          <button type="button" className={`${dialogButton} border-[#dcdcdc]`}>Cancel</button>
          <button type="button" className={`${dialogButton} border-[#dcdcdc]`}>Help</button>
        </div>
      </div>
    </div>
  );
}

export default function App() {
  return (
    <div className="relative flex min-h-screen flex-col border-t border-r border-[#999] bg-[#efefef] font-['Lato','Open_Sans',sans-serif] text-[6px] leading-[8px] text-[#1c1c1c] [text-rendering:geometricPrecision]">
      <header className="flex h-[13px] items-center gap-0.5 bg-[#f4f4f4] pl-1 text-[#8b8b8b]">
        <svg viewBox="0 0 8 8" className="size-2" fill="none" aria-hidden="true">
          <path d="M0 0h6v7H0z" fill="#2b5ea8" />
          <path d="M2 6V1.500h3M2 3.500h2" stroke="#fff" />
          <path d="M5 3h3v5H4z" fill="#e2b93b" />
        </svg>
        <span className="flex-1 truncate">
          FontCreator 15.0 Professional Edition - Licensed to High-Logic - [NoNaMe Classic.ttf - NoNaMe Classic - o]
        </span>
        <div className="flex items-center gap-4 pr-[5px]">
          {['M0 3.500h5', 'M.5.5h4v4h-4z', 'M.5.5l4 4M4.500.5l-4 4'].map((d, i) => (
            <button key={d} type="button" aria-label={['Minimize', 'Maximize', 'Close'][i]}>
              <svg viewBox="0 0 5 5" className="size-[5px]" fill="none">
                <path d={d} stroke="#888" strokeWidth=".8" />
              </svg>
            </button>
          ))}
        </div>
      </header>
      <nav className="flex h-[13px] items-center gap-2 pl-2">
        {['File', 'Edit', 'View', 'Insert', 'Font', 'Tools', 'Help'].map((item) => (
          <button key={item} type="button">{item}</button>
        ))}
      </nav>
      <Toolbars />
      <div className="flex items-end border-b border-[#bcbcbc] pl-[3px] text-[#333]">
        <DocTab title="NoNaMe Classic.ttf" />
        <DocTab title="o - NoNaMe Classic.ttf" active />
        <DocTab title="m - NoNaMe Classic.ttf" />
      </div>
      <main className="mt-[3px] flex flex-1 gap-0.5 pr-0.5 pl-[3px]">
        <div className="flex min-w-0 flex-1 flex-col">
          <GlyphEditor />
          <PreviewPanel />
        </div>
        <aside className="flex w-[147px] shrink-0 flex-col">
          <GlyphProperties />
          <TransformPanel />
        </aside>
      </main>
      <footer className="mt-px flex h-[15px] items-center border-t border-[#cfcfcf] pr-2">
        <span className="ml-[268px] h-2 flex-1 border-l border-[#aaa]" />
        <span className="mr-[18px] h-2 w-px bg-[#aaa]" />
        Contour mode
      </footer>
      <OptionsDialog />
    </div>
  );
}
